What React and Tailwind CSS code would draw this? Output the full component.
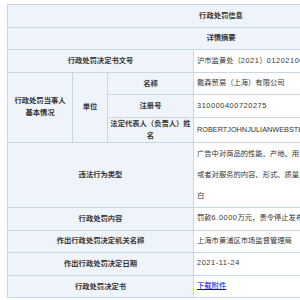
const label = "bg-[#eff4fb] border border-[#c9d6e3] text-center font-bold px-[4px] leading-[12px]"
const value = "bg-white border border-[#c9d6e3] text-left px-[3px] whitespace-nowrap"

// digits in the source are a touch wider than Liberation's
function Num({ children }) {
    return <span className="tracking-[0.6px]">{children}</span>
}

export default function App() {
    return (
        <div className="w-[300px] h-[300px] overflow-hidden bg-white">
            <div className="pt-[4px] pl-[7px]">
                <table
                    className="border-collapse w-[428px] table-fixed text-[7.3px] text-[#333]"
                    style={{ fontFamily: '"Liberation Sans", "Noto Sans CJK SC", sans-serif' }}
                >
                    <colgroup>
                        <col className="w-[65px]" />
                        <col className="w-[35px]" />
                        <col className="w-[86px]" />
                        <col />
                    </colgroup>
                    <tbody>
                        <tr className="h-[22.6px]">
                            <td colSpan={4} className={label}>行政处罚信息</td>
                        </tr>
                        <tr className="h-[22.6px]">
                            <td colSpan={4} className={label}>详情摘要</td>
                        </tr>
                        <tr className="h-[22.6px]">
                            <td colSpan={3} className={label}>行政处罚决定书文号</td>
                            <td className={value}>沪市监黄处（<Num>2021</Num>）<Num>012021000513</Num>号</td>
                        </tr>
                        <tr className="h-[22.6px]">
                            <td rowSpan={3} className={label}>行政处罚当事人<br />基本情况</td>
                            <td rowSpan={3} className={label}>单位</td>
                            <td className={label}>名称</td>
                            <td className={value}>戴森贸易（上海）有限公司</td>
                        </tr>
                        <tr className="h-[22.6px]">
                            <td className={label}>注册号</td>
                            <td className={value}><Num>310000400720275</Num></td>
                        </tr>
                        <tr className="h-[22.6px]">
                            <td className={label + " !px-[1px]"}>法定代表人（负责人）姓名</td>
                            <td className={value}>ROBERTJOHNJULIANWEBSTER</td>
                        </tr>
                        <tr className="h-[65px]">
                            <td colSpan={3} className={label}>违法行为类型</td>
                            <td className={value + " leading-[21px]"}>
                                广告中对商品的性能、产地、用途、质量、价格、生产者、有效期限、允诺等<br />
                                或者对服务的内容、形式、质量、价格、允诺等有表示的，应当准确、清楚、明<br />
                                白
                            </td>
                        </tr>
                        <tr className="h-[22.6px]">
                            <td colSpan={3} className={label}>行政处罚内容</td>
                            <td className={value}>罚款<Num>6.0000</Num>万元，责令停止发布违法广告</td>
                        </tr>
                        <tr className="h-[22.6px]">
                            <td colSpan={3} className={label}>作出行政处罚决定机关名称</td>
                            <td className={value}>上海市黄浦区市场监督管理局</td>
                        </tr>
                        <tr className="h-[22.6px]">
                            <td colSpan={3} className={label}>作出行政处罚决定日期</td>
                            <td className={value}><Num>2021-11-24</Num></td>
                        </tr>
                        <tr className="h-[22.6px]">
                            <td colSpan={3} className={label}>行政处罚决定书</td>
                            <td className={value}>
                                <a href="#" className="text-[#0000ee] underline">下载附件</a>
                            </td>
                        </tr>
                    </tbody>
                </table>
            </div>
        </div>
    )
}
